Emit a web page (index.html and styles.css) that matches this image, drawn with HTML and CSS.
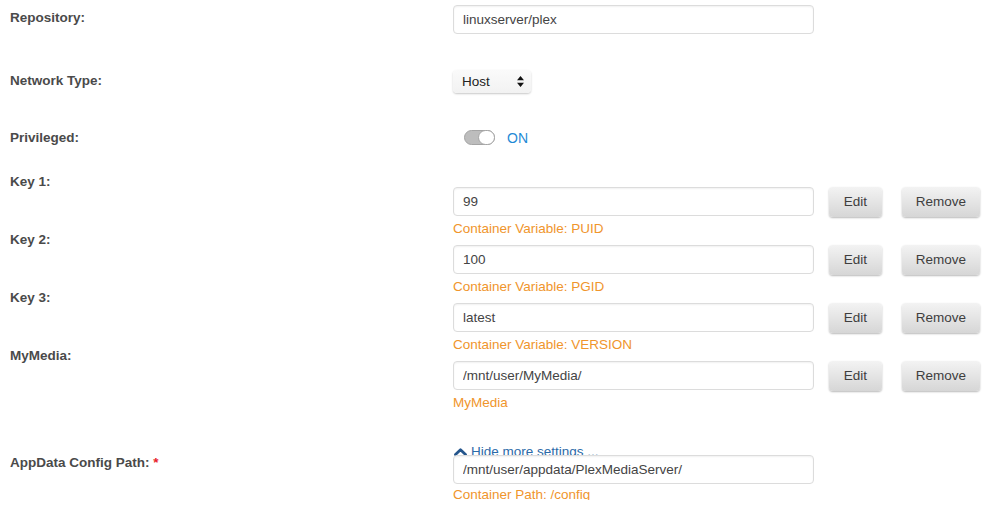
FILE: index.html
```html
<!DOCTYPE html>
<html>
<head>
<meta charset="utf-8">
<link rel="stylesheet" href="styles.css">
</head>
<body>
<div class="form">
  <div class="row row-repo">
    <div class="label">Repository:</div>
    <div class="value"><input class="field" type="text" value="linuxserver/plex"></div>
  </div>

  <div class="row row-net">
    <div class="label">Network Type:</div>
    <div class="value">
      <div class="select">
        <span>Host</span>
        <svg class="arrows" width="7" height="11" viewBox="0 0 7 11"><path d="M3.5 0 L7 4.3 L0 4.3 Z M0 6.7 L7 6.7 L3.5 11 Z" fill="#111"/></svg>
      </div>
    </div>
  </div>

  <div class="row row-priv">
    <div class="label">Privileged:</div>
    <div class="value toggle-wrap">
      <span class="toggle"><span class="knob"></span></span>
      <span class="on">ON</span>
    </div>
  </div>

  <div class="row key-row row-key1">
    <div class="label">Key 1:</div>
    <div class="value">
      <div class="line">
        <input class="field" type="text" value="99">
        <button class="btn btn-edit">Edit</button>
        <button class="btn btn-remove">Remove</button>
      </div>
      <div class="desc">Container Variable: PUID</div>
    </div>
  </div>

  <div class="row key-row">
    <div class="label">Key 2:</div>
    <div class="value">
      <div class="line">
        <input class="field" type="text" value="100">
        <button class="btn btn-edit">Edit</button>
        <button class="btn btn-remove">Remove</button>
      </div>
      <div class="desc">Container Variable: PGID</div>
    </div>
  </div>

  <div class="row key-row">
    <div class="label">Key 3:</div>
    <div class="value">
      <div class="line">
        <input class="field" type="text" value="latest">
        <button class="btn btn-edit">Edit</button>
        <button class="btn btn-remove">Remove</button>
      </div>
      <div class="desc">Container Variable: VERSION</div>
    </div>
  </div>

  <div class="row key-row">
    <div class="label">MyMedia:</div>
    <div class="value">
      <div class="line">
        <input class="field" type="text" value="/mnt/user/MyMedia/">
        <button class="btn btn-edit">Edit</button>
        <button class="btn btn-remove">Remove</button>
      </div>
      <div class="desc">MyMedia</div>
    </div>
  </div>

  <div class="row row-link">
    <div class="label"></div>
    <div class="value">
      <a class="more" href="#"><svg class="chev" width="13" height="8" viewBox="0 0 13 8"><path d="M1.5 6.5 L6.5 1.8 L11.5 6.5" fill="none" stroke="#24558c" stroke-width="2.8" stroke-linecap="round" stroke-linejoin="round"/></svg>Hide more settings ...</a>
    </div>
  </div>

  <div class="row row-app">
    <div class="label">AppData Config Path: <span class="req">*</span></div>
    <div class="value">
      <input class="field" type="text" value="/mnt/user/appdata/PlexMediaServer/">
      <div class="desc">Container Path: /config</div>
    </div>
  </div>
</div>
</body>
</html>
```

FILE: styles.css
```css
* { box-sizing: border-box; }
html, body { margin: 0; padding: 0; background: #fff; }
body {
  font-family: "Liberation Sans", Arial, sans-serif;
  font-size: 13.5px;
  color: #555;
}
.form {
  padding: 5px 0 0 10px;
  display: flex;
  flex-direction: column;
}
.row {
  display: grid;
  grid-template-columns: 443px 1fr;
  align-items: start;
}
.label {
  font-weight: bold;
  color: #4a4a4a;
  line-height: 16px;
}
.req { color: #e8222b; }

.field {
  display: block;
  width: 361px;
  height: 29px;
  margin: 0;
  padding: 0 9px;
  font-family: "Liberation Sans", Arial, sans-serif;
  font-size: 13.5px;
  color: #444;
  background: #fff;
  border: 1px solid #dcdcdc;
  border-radius: 4px;
  box-shadow: inset 0 1px 2px rgba(0,0,0,0.06);
  outline: none;
}

.row-repo .label { padding-top: 5px; }

.row-net { margin-top: 36px; }
.row-net .label { padding-top: 3px; }
.select {
  width: 78px;
  height: 23px;
  display: flex;
  align-items: center;
  justify-content: space-between;
  padding: 0 7px 0 9px;
  background: linear-gradient(#fafafa, #f2f2f2);
  border-radius: 4px;
  box-shadow: 0 1px 2px rgba(0,0,0,0.22);
  color: #222;
}
.arrows { display: block; }

.row-priv { margin-top: 36px; }
.row-priv .label { padding-top: 1px; }
.toggle-wrap {
  display: flex;
  align-items: center;
  padding-left: 11px;
  height: 17px;
}
.toggle {
  position: relative;
  width: 31px;
  height: 15px;
  border-radius: 8px;
  background: #bdbdbd;
  border: 1px solid #a4a4a4;
}
.knob {
  position: absolute;
  top: -1px;
  right: -1px;
  width: 17px;
  height: 15px;
  border-radius: 8px;
  background: #fff;
  border: 1px solid #a4a4a4;
}
.on {
  margin-left: 12px;
  color: #1f8ad6;
  font-size: 14px;
}

.row-key1 { margin-top: 28px; }
.key-row .value { padding-top: 13px; }
.line {
  display: flex;
  align-items: center;
  height: 29px;
}
.btn {
  flex: none;
  height: 30px;
  margin: 0;
  padding: 0;
  border: none;
  border-radius: 4px;
  font-family: "Liberation Sans", Arial, sans-serif;
  font-size: 13.5px;
  color: #3e3e3e;
  background: linear-gradient(#f3f3f3, #d6d6d6);
  box-shadow: 0 1px 2px rgba(0,0,0,0.28);
}
.btn-edit { width: 53px; margin-left: 15px; }
.btn-remove { width: 78px; margin-left: 20px; }

.desc {
  margin-top: 5px;
  line-height: 11px;
  color: #f0952c;
}
.key-row .desc {
  margin-top: 7px;
  margin-bottom: -2px;
}

.row-link { margin-top: 38px; height: 11px; }
.more {
  display: flex;
  align-items: center;
  line-height: 16px;
  color: #2b6aa8;
  text-decoration: none;
  white-space: nowrap;
}
.chev { margin: 0 4px 0 1px; display: block; }

.row-app .field { position: relative; }
```
